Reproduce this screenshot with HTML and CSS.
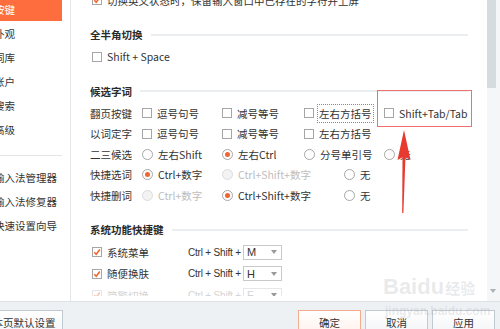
FILE: index.html
```html
<!DOCTYPE html>
<html lang="zh-CN">
<head>
  <meta charset="UTF-8">
  <title>属性设置 - 按键</title>
  <link rel="stylesheet" href="styles.css">
</head>
<body>

<div id="window">
  <div id="top">
    <div id="side">
      <div class="nav">
        <div class="nav-item active">按键</div>
        <div class="nav-item">外观</div>
        <div class="nav-item">词库</div>
        <div class="nav-item">账户</div>
        <div class="nav-item">搜索</div>
        <div class="nav-item">高级</div>
        <div class="nav-sep"></div>
        <div class="nav-item">输入法管理器</div>
        <div class="nav-item">输入法修复器</div>
        <div class="nav-item">快速设置向导</div>
      </div>
    </div>

    <div id="panel">
      <div class="view">
        <div class="scroll">

          <div class="row">
            <label class="chk"><span class="box"><svg viewBox="0 0 8 8"><path d="M1.3 4.2 L3.2 6.2 L6.8 1.6"/></svg></span>切换英文状态时，保留输入窗口中已存在的字符并上屏</label>
          </div>

          <div class="sec">全半角切换</div>
          <div class="row">
            <label class="chk"><span class="box"></span>Shift + Space</label>
          </div>

          <div class="sec">候选字词</div>
          <div class="grid">
            <div class="lbl">翻页按键</div>
            <label class="chk"><span class="box"></span>逗号句号</label>
            <label class="chk"><span class="box"></span>减号等号</label>
            <label class="chk"><span class="box"></span><span class="focus">左右方括号</span></label>
            <label class="chk"><span class="box"></span>Shift+Tab/Tab</label>

            <div class="lbl">以词定字</div>
            <label class="chk"><span class="box"></span>逗号句号</label>
            <label class="chk"><span class="box"></span>减号等号</label>
            <label class="chk"><span class="box"></span>左右方括号</label>
            <span></span>

            <div class="lbl">二三候选</div>
            <label class="chk"><span class="radio"></span>左右Shift</label>
            <label class="chk"><span class="radio on"></span>左右Ctrl</label>
            <label class="chk"><span class="radio"></span>分号单引号</label>
            <label class="chk"><span class="radio"></span>无</label>

            <div class="lbl">快捷选词</div>
            <label class="chk"><span class="radio on"></span>Ctrl+数字</label>
            <label class="chk off"><span class="radio"></span>Ctrl+Shift+数字</label>
            <label class="chk push"><span class="radio"></span>无</label>
            <span></span>

            <div class="lbl">快捷删词</div>
            <label class="chk off"><span class="radio"></span>Ctrl+数字</label>
            <label class="chk"><span class="radio on"></span>Ctrl+Shift+数字</label>
            <label class="chk push"><span class="radio"></span>无</label>
            <span></span>
          </div>

          <div class="sec">系统功能快捷键</div>
          <div class="hk">
            <label class="chk"><span class="box"><svg viewBox="0 0 8 8"><path d="M1.3 4.2 L3.2 6.2 L6.8 1.6"/></svg></span>系统菜单</label>
            <span class="combo-lbl">Ctrl + Shift +</span>
            <span class="select">M</span>
          </div>
          <div class="hk">
            <label class="chk"><span class="box"><svg viewBox="0 0 8 8"><path d="M1.3 4.2 L3.2 6.2 L6.8 1.6"/></svg></span>随便换肤</label>
            <span class="combo-lbl">Ctrl + Shift +</span>
            <span class="select">H</span>
          </div>
          <div class="hk fade">
            <label class="chk"><span class="box"><svg viewBox="0 0 8 8"><path d="M1.3 4.2 L3.2 6.2 L6.8 1.6"/></svg></span>简繁切换</label>
            <span class="combo-lbl">Ctrl + Shift +</span>
            <span class="select">F</span>
          </div>

        </div>
      </div>
    </div>

    <div id="sbar">
      <div class="thumb"></div>
      <div class="sbar-down"></div>
    </div>
  </div>

  <div id="bottom">
    <button class="btn wide">本页默认设置</button>
    <button class="btn primary">确定</button>
    <button class="btn">取消</button>
    <button class="btn">应用</button>
  </div>

  <!-- annotation drawn over the screenshot -->
  <div class="mark"></div>
  <svg class="arrow" viewBox="0 0 16 86">
    <polygon points="8,1 14.5,31 8,27.5 1.5,31"/>
    <polygon points="6.5,27 9.5,27 7.4,84 6.2,84"/>
  </svg>

  <div class="watermark">Baidu<span class="wm-cn">经验</span><small>jingyan.baidu.com</small></div>
</div>

</body>
</html>
```

FILE: styles.css
```css
body {
  margin: 0;
  font-family: "Noto Sans CJK SC", "Noto Sans", sans-serif;
  font-size: 10.5px;
  color: #333;
  background: #fff;
  overflow: hidden;
}

#window {
  position: relative;
  width: 500px;
  height: 329px;
  overflow: hidden;
}

#top {
  display: flex;
  height: 301px;
}

/* left navigation */
#side {
  width: 70px;
  flex: none;
  border-right: 1px solid #e3e7ea;
  overflow: hidden;
}

.nav {
  display: flex;
  flex-direction: column;
  gap: 2px;
  width: 68px;
  margin: -1px 0 0 -6px;
}

.nav-item {
  height: 22px;
  line-height: 22px;
  white-space: nowrap;
}

.nav-item.active {
  background: #fd6d3d;
  color: #fff;
}

.nav-sep {
  height: 1px;
  background: #e2e6e9;
  margin: 12px 0 9px;
}

/* settings panel */
#panel {
  flex: 1;
  padding: 0 19px;
}

.view {
  height: 296px;
  overflow: hidden;
}

.scroll {
  margin-top: -10px;
}

.row {
  display: flex;
  align-items: center;
  height: 20.5px;
}

.row > .chk {
  margin-left: 2px;
}

.sec {
  display: flex;
  align-items: center;
  height: 20px;
  margin: 14px 0 2px;
  font-weight: bold;
  color: #2a2a2a;
}

.sec::after {
  content: "";
  flex: 1;
  height: 2px;
  background: #eaeef1;
  margin-left: 8px;
}

.chk {
  display: flex;
  align-items: center;
  gap: 5px;
  white-space: nowrap;
  height: 20.5px;
}

.box {
  width: 10px;
  height: 10px;
  flex: none;
  box-sizing: border-box;
  border: 1px solid #a6a6a6;
  background: #fff;
  display: flex;
  align-items: center;
  justify-content: center;
}

.box svg {
  width: 8px;
  height: 8px;
}

.box path {
  fill: none;
  stroke: #f26430;
  stroke-width: 1.6;
}

.radio {
  width: 11px;
  height: 11px;
  flex: none;
  box-sizing: border-box;
  border: 1px solid #a6a6a6;
  border-radius: 50%;
  background: #fff;
  display: flex;
  align-items: center;
  justify-content: center;
}

.radio.on::after {
  content: "";
  width: 5px;
  height: 5px;
  border-radius: 50%;
  background: #f26430;
}

.chk.off {
  color: #bdbdbd;
}

.chk.off .radio {
  border-color: #dcdcdc;
  background: #f3f3f3;
}

.chk.push {
  margin-left: 40px;
}

.focus {
  outline: 1px dotted #8a8a8a;
  outline-offset: 1px;
}

.grid {
  display: grid;
  grid-template-columns: 52px 80px 82px 80px auto;
  grid-auto-rows: 20.5px;
  align-items: center;
}

.lbl {
  white-space: nowrap;
}

/* hotkey rows */
.hk {
  display: flex;
  align-items: center;
  height: 21.5px;
  padding-left: 2px;
}

.hk .chk {
  width: 96px;
  flex: none;
}

.combo-lbl {
  width: 55px;
  flex: none;
  font-family: "Liberation Sans", Arial, sans-serif;
  font-size: 10px;
  letter-spacing: -0.2px;
  white-space: nowrap;
}

.select {
  width: 39px;
  height: 15px;
  flex: none;
  box-sizing: border-box;
  border: 1px solid #c9c9c9;
  display: flex;
  align-items: center;
  padding-left: 3px;
  font-family: "Liberation Sans", Arial, sans-serif;
  font-size: 11px;
}

.select::after {
  content: "";
  margin-left: auto;
  margin-right: 4px;
  border-left: 3.5px solid transparent;
  border-right: 3.5px solid transparent;
  border-top: 4px solid #9a9a9a;
}

.hk.fade {
  color: #d4d4d4;
}

.hk.fade .box,
.hk.fade .select {
  border-color: #e6e6e6;
}

.hk.fade .box path {
  stroke: #f8c4ae;
}

/* scrollbar */
#sbar {
  width: 14px;
  flex: none;
  background: #f4f6f8;
  display: flex;
  flex-direction: column;
}

.thumb {
  width: 9px;
  height: 88px;
  background: #d5dce0;
}

.sbar-down {
  margin: auto 0 8px 3px;
  width: 0;
  height: 0;
  border-left: 3px solid transparent;
  border-right: 3px solid transparent;
  border-top: 4px solid #a9b2b8;
}

/* bottom buttons */
#bottom {
  height: 28px;
  box-sizing: border-box;
  border-top: 1px solid #dde2e6;
  background: #eef1f4;
  display: flex;
  align-items: flex-start;
  gap: 4px;
  padding: 8px 5px 0 0;
}

.btn {
  width: 63px;
  height: 24px;
  flex: none;
  box-sizing: border-box;
  border: 1px solid #c2cad1;
  background: linear-gradient(#fff, #f3f5f7);
  font: inherit;
  color: #333;
  padding: 0;
}

.btn.wide {
  width: 78px;
  margin-left: -15px;
  margin-right: auto;
}

.btn.primary {
  border-color: #f4ad8c;
  background: linear-gradient(#fff, #fff3ec);
}

/* annotation */
.mark {
  position: absolute;
  left: 377px;
  top: 90px;
  width: 95px;
  height: 37px;
  box-sizing: border-box;
  border: 1.5px solid #f07070;
}

.arrow {
  position: absolute;
  left: 396px;
  top: 129px;
  width: 16px;
  height: 86px;
  fill: #e8392f;
}

.watermark {
  position: absolute;
  left: 383px;
  top: 276px;
  font-family: "Liberation Sans", Arial, sans-serif;
  font-weight: bold;
  font-size: 22px;
  line-height: 1;
  color: rgba(150, 160, 168, 0.22);
  white-space: nowrap;
}

.wm-cn {
  font-family: "Noto Sans CJK SC", sans-serif;
  font-size: 15px;
  margin-left: 1px;
}

.watermark small {
  display: block;
  font-size: 12px;
  margin-top: 7px;
  margin-left: 2px;
}
```
